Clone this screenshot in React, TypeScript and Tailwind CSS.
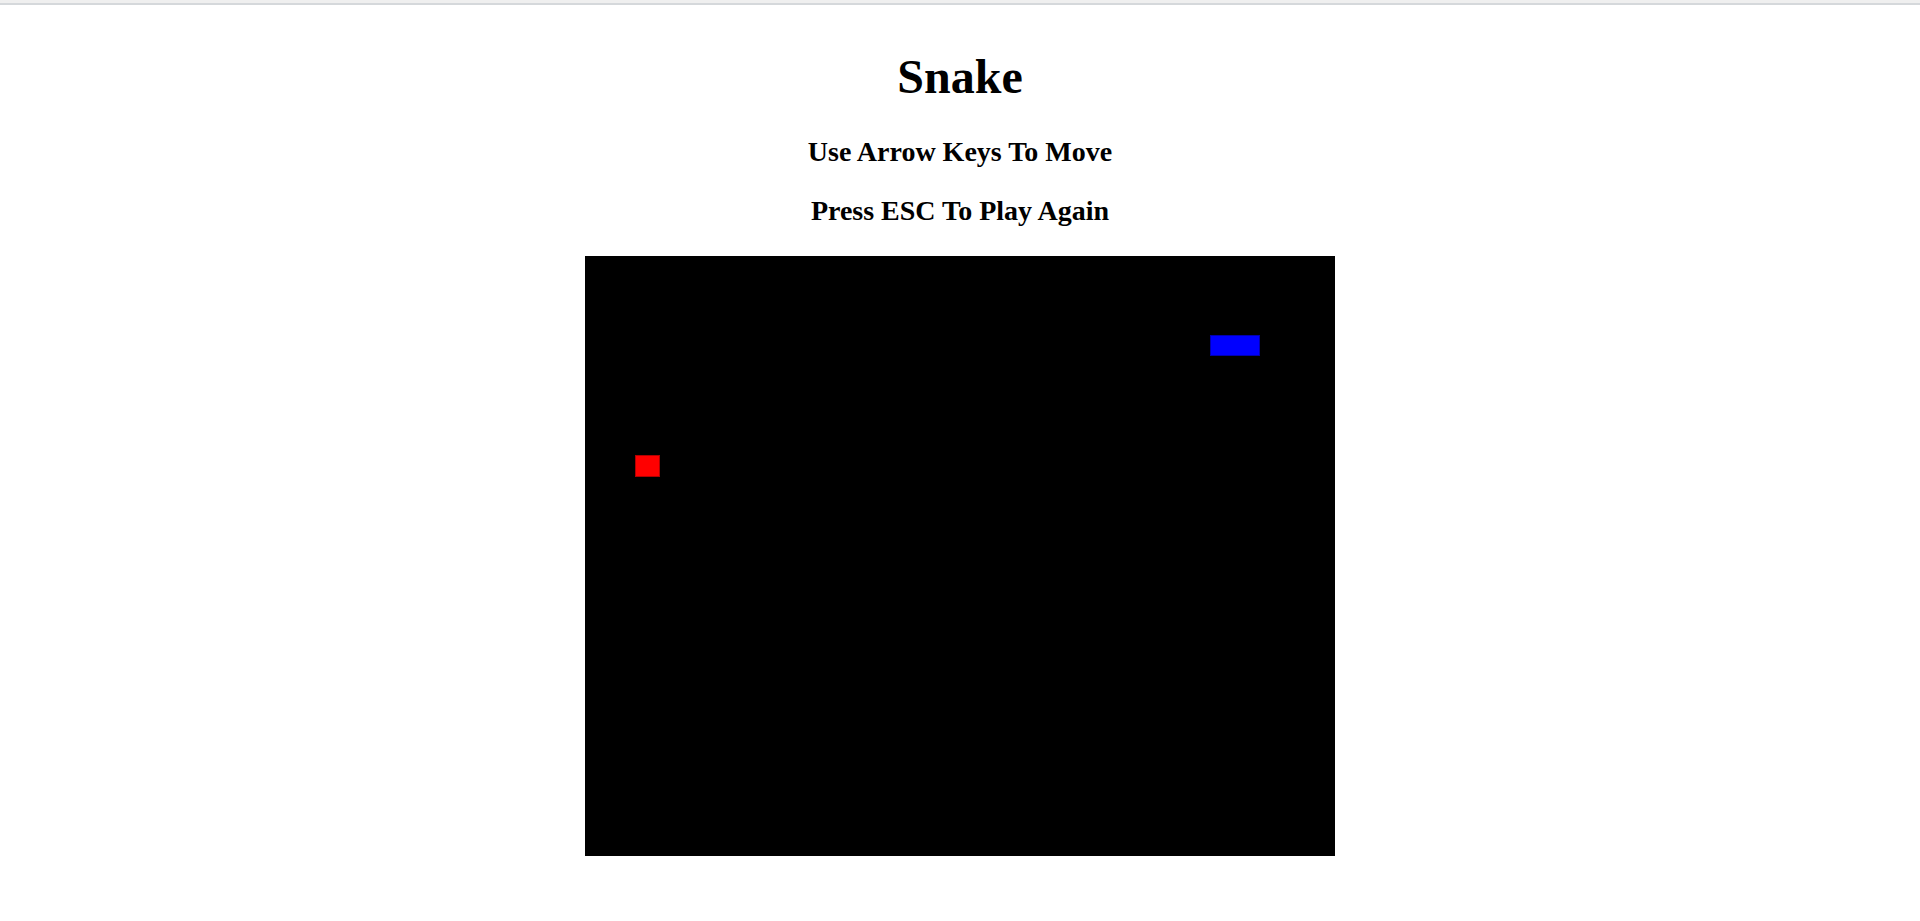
export default function App() {
  return (
    <div className="min-h-screen w-full bg-white" style={{ fontFamily: '"Liberation Serif", "Times New Roman", serif' }}>
      {/* browser chrome edge */}
      <div className="h-[3px] w-full bg-[#efefef]" />
      <div className="h-[2px] w-full bg-[#d5d8db]" />

      <div className="flex flex-col items-center text-black">
        <h1 className="mt-[44px] text-[48px] font-bold leading-[55px]">Snake</h1>
        <h3 className="mt-[32px] text-[28px] font-bold leading-[32px]">Use Arrow Keys To Move</h3>
        <h3 className="mt-[27px] text-[28px] font-bold leading-[32px]">Press ESC To Play Again</h3>

        {/* game board */}
        <div className="relative mt-[29px] h-[600px] w-[750px] bg-black">
          <div className="absolute left-[625px] top-[79px] h-[21px] w-[50px] border border-[#0000b0] bg-[#0000ff]" />
          <div className="absolute left-[50px] top-[199px] h-[22px] w-[25px] border border-[#b00000] bg-[#ff0000]" />
        </div>
      </div>
    </div>
  );
}
